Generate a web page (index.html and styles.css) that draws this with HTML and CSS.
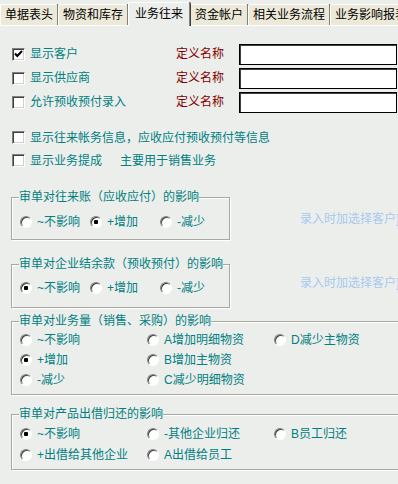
FILE: index.html
```html
<!DOCTYPE html>
<html>
<head>
<meta charset="utf-8">
<title>业务往来</title>
<link rel="stylesheet" href="styles.css">
</head>
<body>

<div class="tabs">
  <div class="tab">单据表头</div>
  <div class="tab">物资和库存</div>
  <div class="tab active">业务往来</div>
  <div class="tab">资金帐户</div>
  <div class="tab">相关业务流程</div>
  <div class="tab">业务影响报表</div>
</div>

<div class="panel">
  <div class="names">
    <label class="check"><span class="box on"><svg width="11" height="11" viewBox="0 0 11 11"><path d="M2 4.5 L4.3 7 L9 2" fill="none" stroke="#000" stroke-width="2"/></svg></span>显示客户</label>
    <span class="def">定义名称</span>
    <input class="name" type="text">

    <label class="check"><span class="box"></span>显示供应商</label>
    <span class="def">定义名称</span>
    <input class="name" type="text">

    <label class="check"><span class="box"></span>允许预收预付录入</label>
    <span class="def">定义名称</span>
    <input class="name" type="text">
  </div>

  <div class="line first">
    <label class="check"><span class="box"></span>显示往来帐务信息，应收应付预收预付等信息</label>
  </div>
  <div class="line">
    <label class="check"><span class="box"></span>显示业务提成</label>
    <span class="note">主要用于销售业务</span>
  </div>

  <div class="grp-row g1">
    <fieldset class="grp small">
      <legend>审单对往来账（应收应付）的影响</legend>
      <div class="radios">
        <label class="opt"><span class="radio"></span>~不影响</label>
        <label class="opt"><span class="radio on"></span>+增加</label>
        <label class="opt"><span class="radio"></span>-减少</label>
      </div>
    </fieldset>
    <span class="hint">录入时加选择客户]</span>
  </div>

  <div class="grp-row g2">
    <fieldset class="grp small">
      <legend>审单对企业结余款（预收预付）的影响</legend>
      <div class="radios">
        <label class="opt"><span class="radio on"></span>~不影响</label>
        <label class="opt"><span class="radio"></span>+增加</label>
        <label class="opt"><span class="radio"></span>-减少</label>
      </div>
    </fieldset>
    <span class="hint">录入时加选择客户]</span>
  </div>

  <fieldset class="grp wide g3">
    <legend>审单对业务量（销售、采购）的影响</legend>
    <div class="cols three">
      <label class="opt"><span class="radio"></span>~不影响</label>
      <label class="opt"><span class="radio on"></span>+增加</label>
      <label class="opt"><span class="radio"></span>-减少</label>
      <label class="opt"><span class="radio"></span>A增加明细物资</label>
      <label class="opt"><span class="radio"></span>B增加主物资</label>
      <label class="opt"><span class="radio"></span>C减少明细物资</label>
      <label class="opt"><span class="radio"></span>D减少主物资</label>
    </div>
  </fieldset>

  <fieldset class="grp wide g4">
    <legend>审单对产品出借归还的影响</legend>
    <div class="cols two">
      <label class="opt"><span class="radio on"></span>~不影响</label>
      <label class="opt"><span class="radio"></span>+出借给其他企业</label>
      <label class="opt"><span class="radio"></span>-其他企业归还</label>
      <label class="opt"><span class="radio"></span>A出借给员工</label>
      <label class="opt"><span class="radio"></span>B员工归还</label>
    </div>
  </fieldset>
</div>

</body>
</html>
```

FILE: styles.css
```css
html, body { margin: 0; }
body {
  width: 398px; height: 484px; overflow: hidden;
  background: #eceeec; color: #008080;
  font: 12px/14px "Liberation Sans", "Noto Sans CJK SC", sans-serif;
}

/* tab strip */
.tabs { display: flex; align-items: flex-end; height: 25px; border-bottom: 1px solid #fff; white-space: nowrap; }
.tab {
  flex: none; height: 20px; line-height: 20px; padding: 0 4px;
  color: #000; background: #ece9d8;
  border: 1px solid; border-bottom: 0; border-color: #fff #808080 #fff #fff;
  box-shadow: 1px 0 0 #404040;
  border-radius: 2px 2px 0 0;
}
.tab.active { position: relative; height: 23px; line-height: 22px; padding: 0 6px; margin-bottom: -1px; background: #eceeec; }

.panel { padding-left: 12px; }

/* checkbox rows */
.names { display: grid; grid-template-columns: 164px 63px 158px; grid-auto-rows: 24px; align-items: center; margin-top: 16px; }
.def { color: #800000; }
.name { width: 158px; height: 21px; box-sizing: border-box; margin: 0; border: 1px solid #000; box-shadow: inset 1px 1px 0 #404040; background: #fff; }

.check { display: flex; align-items: center; gap: 5px; white-space: nowrap; }
.box {
  width: 13px; height: 13px; box-sizing: border-box; flex: none;
  background: #fff; border: 1px solid; border-color: #808080 #fff #fff #808080;
  box-shadow: inset 1px 1px 0 #404040, inset -1px -1px 0 #d4d0c8;
  display: flex; align-items: center; justify-content: center;
}

.line { display: flex; align-items: center; height: 23px; }
.line.first { margin-top: 12px; }
.note { margin-left: 18px; }

/* group boxes */
.grp {
  margin: 0 0 0 -1px; padding: 0 0 0 7px; min-width: 0;
  border: 1px solid #a8a8a0;
  box-shadow: inset 1px 1px 0 #fff, 1px 1px 0 #fff;
}
.grp legend { padding: 0; line-height: 14px; background: #eceeec; white-space: nowrap; }
.grp.small { width: 219px; box-sizing: border-box; flex: none; }
.grp.wide { width: 400px; box-sizing: border-box; }

.grp-row { display: flex; align-items: flex-start; }
.hint { color: #a6caf0; margin-left: 70px; white-space: nowrap; }

.g1 { margin-top: 18px; }
.g1 .radios { margin-top: 10px; padding-bottom: 9px; }
.g1 .hint { margin-top: 22px; }
.g2 { margin-top: 17px; }
.g2 .radios { margin-top: 9px; padding-bottom: 11px; }
.g2 .hint { margin-top: 19px; }

.radios { display: grid; grid-template-columns: repeat(3, 70px); padding-left: 1px; }
.opt { display: flex; align-items: center; gap: 5px; height: 16px; white-space: nowrap; }
.radio {
  width: 12px; height: 12px; box-sizing: border-box; flex: none; border-radius: 50%;
  background: #fff; border: 1px solid; border-color: #808080 #fff #fff #808080;
  box-shadow: inset 1px 1px 0 #404040;
}
.radio.on { background: radial-gradient(circle at 50% 50%, #000 0 2px, #fff 2.5px); }

.cols { display: grid; grid-auto-flow: column; grid-template-columns: repeat(3, 127px); padding-left: 1px; }
.cols .opt { height: auto; }
.g3 { margin-top: 6px; }
.g3 .cols { grid-template-rows: repeat(3, 20px); margin-top: 2px; padding-bottom: 4px; }
.g4 { margin-top: 12px; }
.g4 .cols { grid-template-rows: repeat(2, 21px); margin-top: 2px; padding-bottom: 4px; }
```
